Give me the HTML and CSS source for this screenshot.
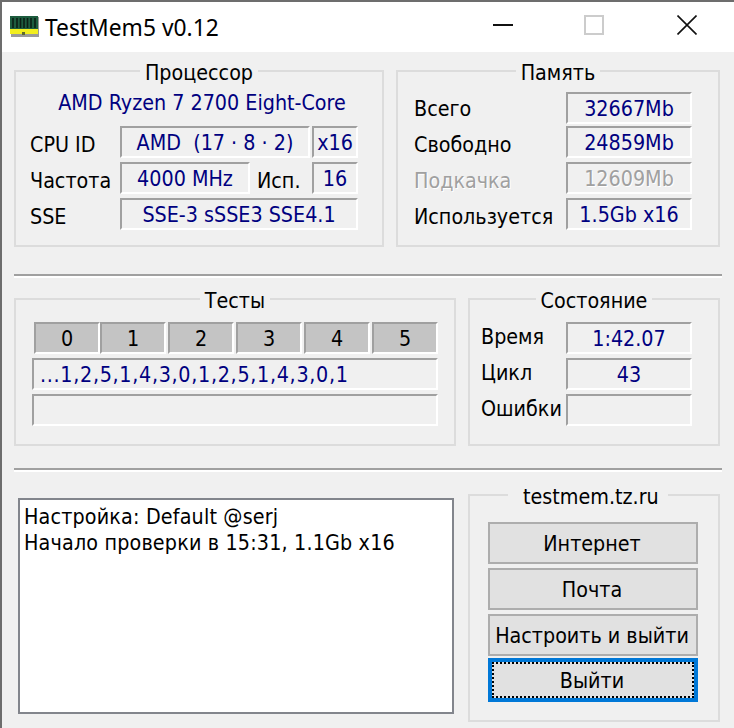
FILE: index.html
```html
<!DOCTYPE html>
<html lang="ru">
<head>
<meta charset="utf-8">
<title>TestMem5 v0.12</title>
<link rel="stylesheet" href="styles.css">
</head>
<body>
<div class="window">
  <header class="titlebar">
    <svg class="app-icon" width="29" height="21" viewBox="0 0 29 21">
      <rect x="1" y="1" width="28" height="20" fill="#9a9a9a"/>
      <rect x="0" y="0" width="28" height="13" fill="#1d5c3e"/>
      <path d="M3 2v10M7 2v10M10.500 2v10M14 2v10M17.500 2v10M21 2v10M25 2v10" stroke="#0c1f16" stroke-width="1.6"/>
      <rect x="0" y="13" width="28" height="5" fill="#f2ee1e"/>
      <rect x="12" y="16" width="3" height="3" fill="#5e6a2a"/>
    </svg>
    <span class="title-text">TestMem5 v0.12</span>
    <div class="caption">
      <span class="cap-btn cap-min"></span>
      <span class="cap-btn cap-max"></span>
      <svg class="cap-close" width="20" height="20" viewBox="0 0 20 20"><path d="M0.500 0.500L19.500 19.500M19.500 0.500L0.500 19.500" stroke="#111" stroke-width="1.6"/></svg>
    </div>
  </header>

  <main class="content">
    <section class="row row-top">
      <fieldset class="group cpu">
        <legend>Процессор</legend>
        <div class="cpu-grid">
          <div class="cpu-name">AMD Ryzen 7 2700 Eight-Core</div>
          <span class="label">CPU ID</span>
          <span class="field span-2 gap-r">AMD&nbsp; (17 · 8 · 2)</span>
          <span class="field">x16</span>
          <span class="label">Частота</span>
          <span class="field">4000 MHz</span>
          <span class="label label-mid">Исп.</span>
          <span class="field">16</span>
          <span class="label">SSE</span>
          <span class="field span-3">SSE-3 sSSE3 SSE4.1</span>
        </div>
      </fieldset>
      <fieldset class="group mem">
        <legend>Память</legend>
        <div class="kv-grid">
          <span class="label">Всего</span><span class="field">32667Mb</span>
          <span class="label">Свободно</span><span class="field">24859Mb</span>
          <span class="label disabled">Подкачка</span><span class="field disabled">12609Mb</span>
          <span class="label">Используется</span><span class="field">1.5Gb x16</span>
        </div>
      </fieldset>
    </section>

    <hr class="divider first">

    <section class="row row-mid">
      <fieldset class="group tests">
        <legend>Тесты</legend>
        <div class="tests-stack">
          <div class="cells">
            <span class="cell">0</span><span class="cell">1</span><span class="cell">2</span><span class="cell">3</span><span class="cell">4</span><span class="cell">5</span>
          </div>
          <span class="field left seq">...1,2,5,1,4,3,0,1,2,5,1,4,3,0,1</span>
          <span class="field"></span>
        </div>
      </fieldset>
      <fieldset class="group state">
        <legend>Состояние</legend>
        <div class="state-grid">
          <span class="label">Время</span><span class="field">1:42.07</span>
          <span class="label">Цикл</span><span class="field">43</span>
          <span class="label">Ошибки</span><span class="field"></span>
        </div>
      </fieldset>
    </section>

    <hr class="divider second">

    <section class="row row-bottom">
      <div class="log">Настройка: Default @serj<br>Начало проверки в 15:31, 1.1Gb x16</div>
      <fieldset class="group links">
        <legend>testmem.tz.ru</legend>
        <div class="buttons">
          <button class="btn" type="button">Интернет</button>
          <button class="btn" type="button">Почта</button>
          <button class="btn" type="button">Настроить и выйти</button>
          <button class="btn focused" type="button">Выйти</button>
        </div>
      </fieldset>
    </section>
  </main>
</div>
</body>
</html>
```
FILE: styles.css
```css
* { box-sizing: border-box; }
html, body { margin: 0; padding: 0; }
body {
  width: 734px;
  height: 728px;
  overflow: hidden;
  background: #f0f0f0;
  color: #000;
  font-family: "DejaVu Sans Condensed", "DejaVu Sans", sans-serif;
  font-size: 21.3px;
}
.window {
  width: 734px;
  height: 728px;
  border-left: 2px solid #6d6d6d;
  border-top: 2px solid #6d6d6d;
  background: #f0f0f0;
}
.titlebar {
  height: 50px;
  background: #fff;
  display: flex;
  align-items: center;
  padding-left: 8px;
}
.app-icon { margin-bottom: 1px; flex: none; }
.title-text {
  margin-left: 6px;
  font-family: "Noto Sans", sans-serif;
  font-size: 22.8px;
  color: #000;
}
.caption {
  margin-left: auto;
  margin-bottom: 4px;
  display: flex;
  align-items: center;
  padding-right: 37px;
}
.cap-btn { display: block; }
.cap-min { width: 20px; height: 2px; background: #111; margin-right: 71px; }
.cap-max { width: 20px; height: 20px; border: 2px solid #ccc; margin-right: 73px; }
.cap-close { display: block; }

.content { padding: 0 12px; }
.row { display: flex; gap: 12px; }
.row-top { margin-top: 7px; }
.row-mid { margin-top: 9px; }
.row-bottom { margin-top: 11px; }

.divider {
  margin: 0;
  height: 4px;
  border: 0;
  border-top: 2px solid #a0a0a0;
  border-bottom: 2px solid #fff;
}
.divider.first { margin-top: 27px; }
.divider.second { margin-top: 22px; }

.group {
  margin: 0;
  min-width: 0;
  border: 2px solid #dcdcdc;
}
.group legend {
  height: 24px;
  line-height: 24px;
  padding: 2px 5px 0;
  margin: 0 auto;
  white-space: nowrap;
}
.links legend { padding: 2px 9px 0 15px; margin: 0 0 0 20px; }
.cpu { width: 370px; padding: 9px 14px 15px; }
.mem { width: 324px; padding: 9px 16px 15px; }
.tests { width: 442px; padding: 11px 16px 18px; }
.state { width: 252px; padding: 11px 11px 18px; }
.links { width: 252px; padding: 15px 20px 18px 18px; }

.cpu-grid {
  display: grid;
  grid-template-columns: 90px 130px 62px 46px;
  grid-template-rows: 30px 32px 32px 32px;
  row-gap: 4px;
}
.cpu-name {
  grid-column: 1 / -1;
  padding-left: 16px;
  text-align: center;
  color: #000080;
  line-height: 22px;
}
.kv-grid {
  display: grid;
  grid-template-columns: 152px 126px;
  grid-template-rows: 30px 32px 32px 32px;
  row-gap: 4px;
}
.kv-grid > :nth-child(-n+2) { height: 32px; }
.state-grid {
  display: grid;
  grid-template-columns: 85px 126px;
  grid-auto-rows: 32px;
  row-gap: 4px;
}
.tests-stack { display: grid; grid-auto-rows: 32px; row-gap: 4px; }

.label {
  display: flex;
  align-items: center;
  white-space: nowrap;
}
.cpu-grid .label, .kv-grid .label { padding-top: 4px; }
.kv-grid .label:first-child { padding-top: 0; }
.state-grid .label { padding-bottom: 4px; }
.label-mid { padding-left: 7px; }
.field {
  display: flex;
  align-items: center;
  justify-content: center;
  border-top: 2px solid #a0a0a0;
  border-left: 2px solid #a0a0a0;
  border-bottom: 2px solid #fff;
  border-right: 2px solid #fff;
  color: #000080;
  white-space: nowrap;
  min-width: 0;
}
.field.left { justify-content: flex-start; padding-left: 6px; }
.seq { letter-spacing: 0.7px; }
.span-2 { grid-column: span 2; }
.span-3 { grid-column: span 3; }
.gap-r { margin-right: 2px; }
.disabled { color: #a0a0a0; text-shadow: 1px 1px 0 #fff; }

.cells { display: flex; gap: 2px; padding-left: 2px; }
.cell {
  flex: 0 0 66px;
  display: flex;
  align-items: center;
  justify-content: center;
  background: #c4c4c4;
  border-top: 2px solid #a0a0a0;
  border-left: 2px solid #a0a0a0;
  border-bottom: 2px solid #fff;
  border-right: 2px solid #fff;
}
.cell:first-child { margin-right: -2px; }

.log {
  width: 436px;
  height: 216px;
  margin: 15px 2px 0 4px;
  padding: 4px;
  border: 2px solid #82858c;
  background: #fff;
  line-height: 26px;
  letter-spacing: 0.17px;
  white-space: nowrap;
}

.buttons { display: grid; width: 210px; grid-auto-rows: 42px; row-gap: 4px; }
.btn {
  margin: 0;
  padding: 0 2px 0 0;
  background: #e1e1e1;
  border: 2px solid #adadad;
  color: #000;
  font: inherit;
  white-space: nowrap;
}
.btn.focused {
  margin-top: -2px;
  border: 4px solid #0078d7;
  outline: 2px dotted #000;
  outline-offset: -6px;
}
```
